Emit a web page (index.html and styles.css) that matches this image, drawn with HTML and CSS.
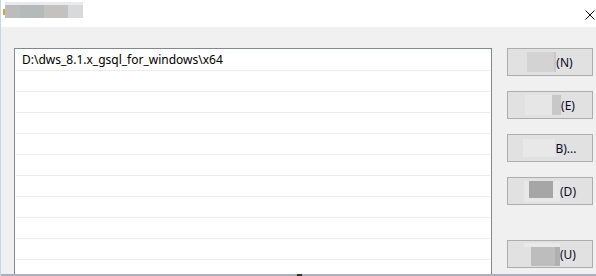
FILE: index.html
```html
<!DOCTYPE html>
<html lang="en">
<head>
    <meta charset="UTF-8">
    <title>Edit environment variable</title>
    <link rel="stylesheet" href="styles.css">
</head>
<body>

<div class="window">
    <div class="titlebar">
        <span class="app-icon"></span>
        <span class="title-blur">
            <i class="t1"></i><i class="t2"></i><i class="t3"></i><i class="t4"></i>
        </span>
        <span class="close">
            <svg width="10" height="10" viewBox="0 0 10 10">
                <path d="M0.5 0.5 L9.5 9.5 M9.5 0.5 L0.5 9.5" stroke="#111" stroke-width="1"/>
            </svg>
        </span>
    </div>

    <div class="content">
        <div class="list">
            <div class="row">D:\dws_8.1.x_gsql_for_windows\x64</div>
            <div class="row"></div>
            <div class="row"></div>
            <div class="row"></div>
            <div class="row"></div>
            <div class="row"></div>
            <div class="row"></div>
            <div class="row"></div>
            <div class="row"></div>
            <div class="row"></div>
            <div class="row"></div>
        </div>

        <div class="buttons">
            <button class="btn"><span class="blur blur-n"></span>(N)</button>
            <button class="btn"><span class="blur blur-e"></span>(E)</button>
            <button class="btn"><span class="blur blur-b"></span>B)...</button>
            <button class="btn"><span class="blur blur-d"></span>(D)</button>
            <button class="btn btn-last"><span class="blur blur-u"></span>(U)</button>
        </div>
    </div>
    <div class="bottom-edge"><span class="grip"></span></div>
</div>

</body>
</html>
```

FILE: styles.css
```css
body {
    margin: 0;
    font-family: "Noto Sans", "Liberation Sans", sans-serif;
    font-size: 12px;
    background-color: #f0f0f0;
}
.window {
    width: 596px;
    height: 276px;
    display: flex;
    flex-direction: column;
    border-left: 1px solid #c9d5e8;
    box-sizing: border-box;
    overflow: hidden;
}
.titlebar {
    height: 27px;
    background-color: white;
    display: flex;
    align-items: flex-start;
    flex-shrink: 0;
}
.app-icon {
    width: 2px;
    height: 6px;
    margin: 9px 0 0 2px;
    background-color: #e0a030;
}
.title-blur {
    display: flex;
    margin-top: 2px;
    height: 16px;
    border-top: 3px solid #e9eaed;
    box-sizing: border-box;
}
.title-blur i {
    display: block;
    height: 13px;
}
.t1 { width: 15px; background-color: #bcbcbc; }
.t2 { width: 24px; background-color: #b5b9b9; }
.t3 { width: 24px; background-color: #c4c2bf; }
.t4 { width: 15px; background-color: #d8d9db; }
.close {
    margin: 7px 0 0 auto;
    width: 10px;
    padding-right: 1px;
}
.content {
    flex: 1;
    display: flex;
    padding: 21px 0 0 13px;
    overflow: hidden;
}
.list {
    width: 478px;
    height: 240px;
    box-sizing: border-box;
    border: 1px solid #828790;
    border-bottom: none;
    background-color: white;
    padding: 1px 1px 0;
    flex-shrink: 0;
}
.row {
    height: 20px;
    border-bottom: 1px solid #ececec;
    padding-left: 6px;
    line-height: 19px;
    color: #000;
}
.buttons {
    display: flex;
    flex-direction: column;
    gap: 15px;
    margin-left: 15px;
}
.btn {
    width: 86px;
    height: 28px;
    background-color: #e1e1e1;
    border: 1px solid #adadad;
    font-family: "Noto Sans", "Liberation Sans", sans-serif;
    font-size: 12px;
    color: #0a0a28;
    display: flex;
    align-items: center;
    justify-content: center;
    padding: 0;
}
.btn-last {
    margin-top: 20px;
}
.blur {
    display: inline-block;
    height: 20px;
}
.blur-n {
    width: 27px;
    background-color: #d3d3d3;
    border-right: 2px solid #c8c8c8;
}
.blur-e {
    width: 36px;
    background: linear-gradient(to right, #e6e6e6 27px, #c8c8c8 27px);
    box-sizing: border-box;
}
.blur-b {
    width: 32px;
    height: 18px;
    background-color: #e8e8e8;
}
.blur-d {
    width: 36px;
    height: 21px;
    background: linear-gradient(#a6a6a6, #a6a6a6) no-repeat 5px 0 / 24px 17px, #e8e8e8;
}
.blur-u {
    width: 36px;
    height: 23px;
    background: linear-gradient(to right, #bdbdbd 24px, #b0b0b0 24px) no-repeat 7px 4px / 29px 19px, linear-gradient(#e9e9e9, #e9e9e9) no-repeat 0 0 / 36px 4px;
}
.bottom-edge {
    height: 2px;
    background-color: #a9b1c0;
    flex-shrink: 0;
    position: relative;
}
.grip {
    position: absolute;
    left: 296px;
    top: 0;
    width: 5px;
    height: 2px;
    background-color: #333;
}
```
